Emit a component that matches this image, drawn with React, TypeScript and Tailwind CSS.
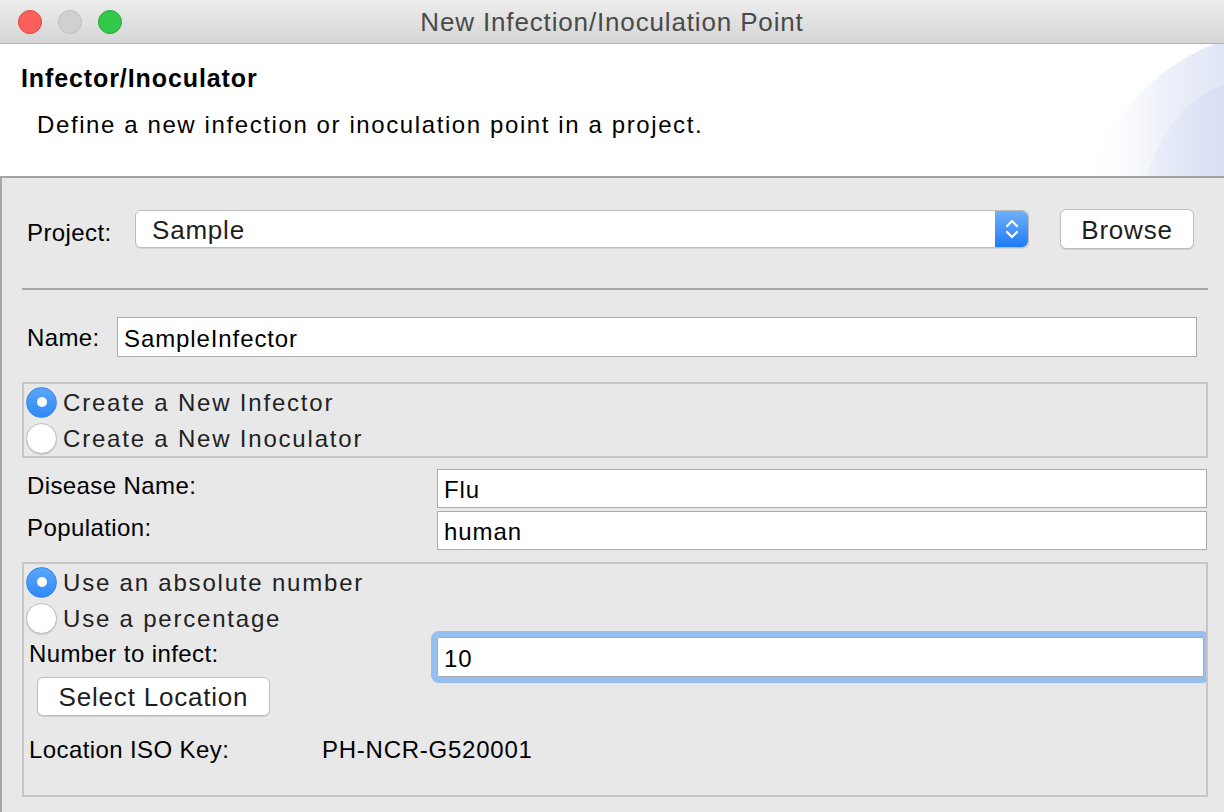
import React from "react";

const sans = "font-['Liberation_Sans',Arial,sans-serif]";

function Radio({ checked, label }: { checked?: boolean; label: string }) {
  return (
    <div className="flex h-[36px] items-center pl-[2px]">
      {checked ? (
        <div className="flex h-[31px] w-[31px] shrink-0 items-center justify-center rounded-full border border-[#3689ea] bg-gradient-to-b from-[#5aa6fa] to-[#2f88f4]">
          <div className="h-[10px] w-[10px] rounded-full bg-white" />
        </div>
      ) : (
        <div className="h-[31px] w-[31px] shrink-0 rounded-full border border-[#bdbdbd] bg-white shadow-[0_1px_1px_rgba(0,0,0,0.12)]" />
      )}
      <span className="ml-[6px] pt-[2px] text-[24px] leading-[28px] tracking-[1.8px] text-[#222]">{label}</span>
    </div>
  );
}

function TextBox({ value, className }: { value: string; className: string }) {
  return (
    <div className={`flex items-center border border-[#ababab] bg-white pl-[6px] pt-[3px] text-[24px] tracking-[0.9px] text-black ${className}`}>
      {value}
    </div>
  );
}

function HeaderSwoosh() {
  return (
    <svg className="absolute right-0 top-0" width="150" height="132" viewBox="0 0 150 132">
      <defs>
        <linearGradient id="sw1" x1="0" y1="0" x2="1" y2="0">
          <stop offset="0" stopColor="#ffffff" stopOpacity="0" />
          <stop offset="0.55" stopColor="#eef1fa" />
          <stop offset="1" stopColor="#e0e6f6" />
        </linearGradient>
        <linearGradient id="sw2" x1="0" y1="0" x2="1" y2="0">
          <stop offset="0" stopColor="#e4e9f7" stopOpacity="0.4" />
          <stop offset="1" stopColor="#d8dff4" />
        </linearGradient>
      </defs>
      <path d="M140,0 C95,18 40,60 12,132 L150,132 L150,0 Z" fill="url(#sw1)" />
      <path d="M150,42 C120,48 92,78 72,132 L150,132 Z" fill="url(#sw2)" />
    </svg>
  );
}

export default function App() {
  return (
    <div className={`flex h-[812px] w-[1224px] flex-col overflow-hidden bg-[#e8e8e8] ${sans}`}>
      {/* title bar */}
      <div className="flex h-[44px] shrink-0 items-center border-b border-[#b3b3b3] bg-gradient-to-b from-[#ededed] to-[#d5d5d5]">
        <div className="flex w-[130px] items-center gap-[16px] pl-[18px]">
          <div className="h-[24px] w-[24px] rounded-full border border-[#e0443e] bg-[#fc605c]" />
          <div className="h-[24px] w-[24px] rounded-full border border-[#bfbfbf] bg-[#d0d0d0]" />
          <div className="h-[24px] w-[24px] rounded-full border border-[#27a83a] bg-[#34c84a]" />
        </div>
        <div className="flex-1 pt-[2px] text-center text-[26px] tracking-[0.85px] text-[#4a4a4a]">New Infection/Inoculation Point</div>
        <div className="w-[130px]" />
      </div>

      {/* header */}
      <div className="relative h-[134px] shrink-0 border-b-2 border-[#a3a3a3] bg-white">
        <HeaderSwoosh />
        <div className="relative pl-[21px] pt-[20px] text-[25px] font-bold leading-[28px] tracking-[0.9px] text-black">Infector/Inoculator</div>
        <div className="relative pl-[37px] pt-[19px] text-[24px] leading-[28px] tracking-[1.6px] text-black">
          Define a new infection or inoculation point in a project.
        </div>
      </div>

      {/* body */}
      <div className="flex flex-1 flex-col border-l-2 border-[#a8a8a8] pl-[20px] pr-[16px] pt-[31px]">
        {/* project */}
        <div className="flex h-[40px] items-center">
          <div className="ml-[5px] w-[108px] pt-[7px] text-[24px] leading-[28px] tracking-[0.4px] text-black">Project:</div>
          <div className="flex h-[38px] w-[894px] items-stretch rounded-[6px] border border-[#bcbcbc] bg-white shadow-[0_1px_0_rgba(0,0,0,0.08)]">
            <div className="flex flex-1 items-center pl-[16px] pt-[3px] text-[26px] tracking-[0.8px] text-[#1e1e1e]">Sample</div>
            <div className="flex w-[33px] items-center justify-center rounded-r-[6px] bg-gradient-to-b from-[#6eaffa] to-[#1a7bf7]">
              <svg width="14" height="24" viewBox="0 0 14 24" fill="none" stroke="white" strokeWidth="2.2" strokeLinecap="round" strokeLinejoin="round">
                <path d="M2,9 L7,4 L12,9" />
                <path d="M2,15 L7,20 L12,15" />
              </svg>
            </div>
          </div>
          <div className="ml-[31px] flex h-[40px] w-[134px] items-center justify-center rounded-[6px] border border-[#bdbdbd] bg-white pt-[3px] text-[26px] tracking-[0.8px] text-[#1e1e1e] shadow-[0_1px_0_rgba(0,0,0,0.1)]">
            Browse
          </div>
        </div>

        <div className="mt-[39px] h-[2px] bg-[#a8a8a8]" />

        {/* name */}
        <div className="mt-[27px] flex h-[40px] items-center">
          <div className="ml-[5px] w-[90px] pt-[1px] text-[24px] leading-[28px] tracking-[0.4px] text-black">Name:</div>
          <TextBox value="SampleInfector" className="h-[40px] w-[1080px]" />
        </div>

        {/* infector / inoculator */}
        <div className="mt-[25px] h-[76px] border-2 border-[#c6c6c6]">
          <Radio checked label="Create a New Infector" />
          <Radio label="Create a New Inoculator" />
        </div>

        {/* disease / population */}
        <div className="mt-[11px] flex h-[39px]">
          <div className="ml-[5px] w-[410px] pt-[3px] text-[24px] leading-[28px] tracking-[0.4px] text-black">Disease Name:</div>
          <TextBox value="Flu" className="h-[39px] w-[770px]" />
        </div>
        <div className="mt-[3px] flex h-[39px]">
          <div className="ml-[5px] w-[410px] pt-[3px] text-[24px] leading-[28px] tracking-[0.4px] text-black">Population:</div>
          <TextBox value="human" className="h-[39px] w-[770px]" />
        </div>

        {/* amount */}
        <div className="mt-[12px] flex h-[235px] flex-col overflow-hidden border-2 border-[#c6c6c6]">
          <Radio checked label="Use an absolute number" />
          <Radio label="Use a percentage" />
          <div className="mt-[1px] flex h-[40px]">
            <div className="ml-[5px] w-[408px] pt-[3px] text-[24px] leading-[28px] tracking-[0.4px] text-black">Number to infect:</div>
            <TextBox value="10" className="mr-[2px] h-[40px] flex-1 rounded-[2px] outline outline-[6px] outline-[#95bff0]" />
          </div>
          <div className="ml-[13px] flex h-[39px] w-[233px] items-center justify-center rounded-[6px] border border-[#bdbdbd] bg-white pt-[2px] text-[26px] tracking-[0.8px] text-[#1e1e1e] shadow-[0_1px_0_rgba(0,0,0,0.1)]">
            Select Location
          </div>
          <div className="mt-[20px] flex text-[24px] leading-[28px] tracking-[0.4px] text-black">
            <div className="ml-[5px] w-[293px]">Location ISO Key:</div>
            <div className="tracking-[0.75px]">PH-NCR-G520001</div>
          </div>
        </div>
      </div>
    </div>
  );
}
